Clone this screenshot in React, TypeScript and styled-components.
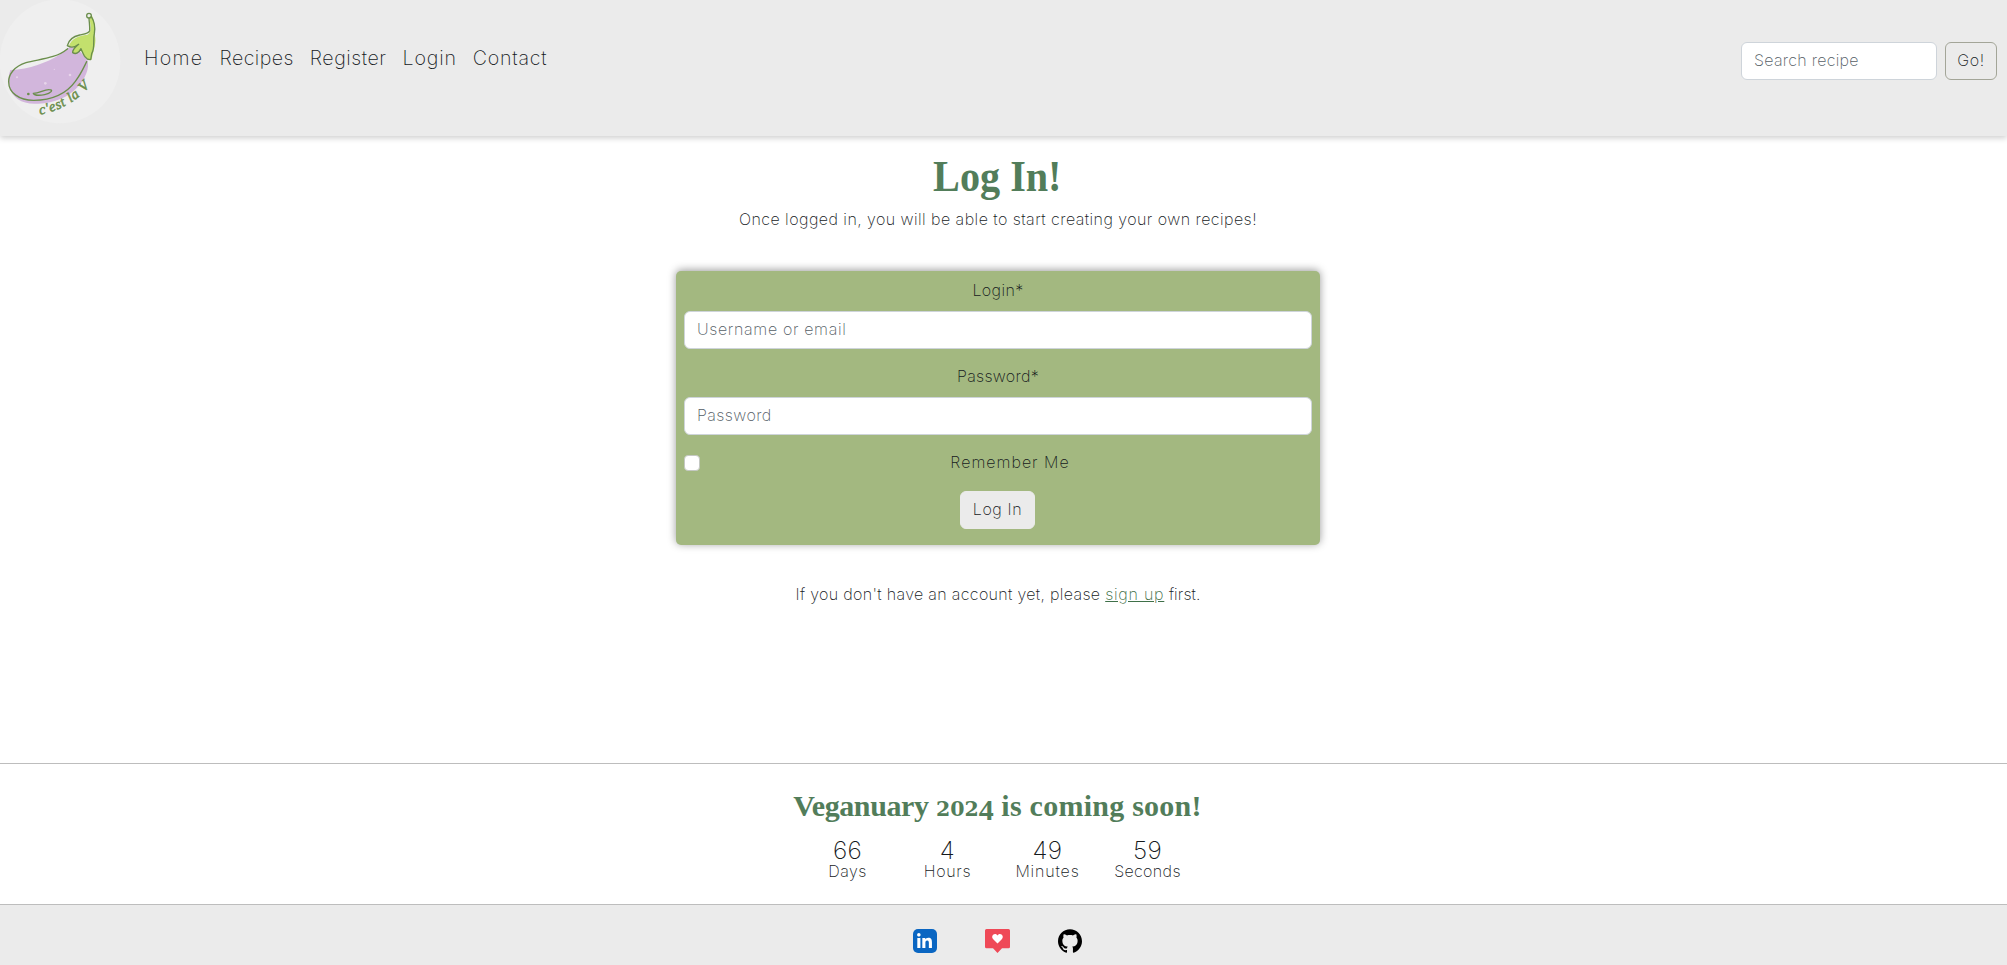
import React from 'react';
import styled, { createGlobalStyle } from 'styled-components';
import { FaLinkedinIn } from 'react-icons/fa';
import { SiGithub } from 'react-icons/si';

const Global = createGlobalStyle`
  *, *::before, *::after { box-sizing: border-box; }
  body {
    margin: 0;
    background: #fff;
    color: #15191c;
    font: 200 16px/24px Inter, sans-serif;
    overflow: hidden;
  }
`;

const Page = styled.div`
  height: 965px;
  display: flex;
  flex-direction: column;
`;

const Header = styled.header`
  height: 136px;
  flex: none;
  display: flex;
  align-items: flex-start;
  background: #ebebeb;
  box-shadow: 0 2px 6px rgba(0, 0, 0, 0.2);
  padding-right: 10px;
`;

const Logo = styled.svg`
  width: 130px;
  height: 124px;
  flex: none;
`;

const Nav = styled.nav`
  display: flex;
  gap: 16px;
  padding: 42px 0 0 14px;
  flex: 1;
`;

const Text = styled.span<{ $track?: number }>`
  letter-spacing: ${(p) => p.$track ?? 0}px;
`;

const NavLink = styled.a<{ $track: number }>`
  font-size: 19.6px;
  line-height: 32px;
  color: #15191c;
  letter-spacing: ${(p) => p.$track}px;
`;

const Search = styled.form`
  display: flex;
  gap: 8px;
  padding-top: 42px;
`;

const Input = styled.input<{ $track: number; $width?: string }>`
  display: block;
  width: ${(p) => p.$width ?? '100%'};
  height: 38px;
  padding: 0 12px 2px;
  border: 1px solid #ced4da;
  border-radius: 6px;
  background: #fff;
  font: inherit;
  letter-spacing: ${(p) => p.$track}px;
  &::placeholder { color: #545d65; opacity: 1; }
`;

const Button = styled.button<{ $outline?: boolean; $width: number }>`
  width: ${(p) => p.$width}px;
  height: 38px;
  padding: 0 0 2px;
  border: 1px solid ${(p) => (p.$outline ? '#a3a598' : '#ebebeb')};
  border-radius: 6px;
  background: #ebebeb;
  color: #15191c;
  font: inherit;
  letter-spacing: 0.6px;
`;

const Main = styled.main`
  height: 627px;
  flex: none;
  display: flex;
  flex-direction: column;
  align-items: center;
  padding: 17px 11px 0 0;
`;

const Title = styled.h1`
  margin: 0 1px 6px 0;
  font: 700 44px/48px "Liberation Serif", serif;
  color: #527d5a;
  transform: scaleX(0.913);
`;

const Line = styled.p<{ $track?: number }>`
  margin: 0;
  white-space: pre;
  letter-spacing: ${(p) => p.$track ?? 0}px;
`;

const Card = styled.form`
  width: 644px;
  height: 274px;
  margin: 40px 0 37px;
  padding: 7px 8px 0;
  display: flex;
  flex-direction: column;
  align-items: center;
  background: #a3b880;
  border-radius: 5px;
  box-shadow: 0 -1px 8px rgba(0, 0, 0, 0.4);
`;

const Field = styled.div`
  width: 100%;
  margin-bottom: 15px;
  text-align: center;
`;

const Label = styled.label<{ $track: number }>`
  display: block;
  margin-bottom: 9px;
  letter-spacing: ${(p) => p.$track}px;
`;

const CheckRow = styled.div`
  width: 100%;
  height: 24px;
  margin: 1px 0 16px;
  display: flex;
  align-items: center;
  gap: 8px;
`;

const Checkbox = styled.input`
  appearance: none;
  width: 16px;
  height: 16px;
  margin: 0;
  border: 1px solid #c4c8c2;
  border-radius: 4px;
  background: #fff;
`;

const CheckLabel = styled.label`
  flex: 1;
  padding-bottom: 2px;
  text-align: center;
  letter-spacing: 1px;
`;

const SubmitRow = styled.div`
  padding-right: 1px;
`;

const SignUp = styled.a`
  color: #3f7049;
  text-decoration: underline;
  letter-spacing: 0.75px;
`;

const Countdown = styled.section`
  height: 141px;
  flex: none;
  border-top: 1px solid #bdbdbd;
  padding: 25px 12px 0 0;
  display: flex;
  flex-direction: column;
  align-items: center;
`;

const Subtitle = styled.h2`
  display: flex;
  align-items: baseline;
  gap: 7.5px;
  margin: 0 0 12px;
  font: 700 30px/34px "Liberation Serif", serif;
  color: #527d5a;
`;

const Year = styled.span`
  display: flex;
  align-items: baseline;
`;

const LowDigits = styled.span`
  font: 700 20.5px/34px "DejaVu Serif", serif;
`;

const DeepDigit = styled.span`
  position: relative;
  top: 4px;
`;

const Units = styled.div`
  display: grid;
  grid-template-columns: repeat(4, 100px);
`;

const Unit = styled.div`
  text-align: center;
  display: flex;
  flex-direction: column;
`;

const Value = styled.span`
  font-size: 24.5px;
  line-height: 24px;
  letter-spacing: 0.3px;
`;

const UnitName = styled.span<{ $track: number }>`
  line-height: 18px;
  letter-spacing: ${(p) => p.$track}px;
`;

const Footer = styled.footer`
  flex: 1;
  display: flex;
  justify-content: center;
  gap: 48px;
  padding: 24px 13px 0 0;
  border-top: 1px solid #bdbdbd;
  background: #ebebeb;
`;

const LinkedIn = styled.a`
  width: 24px;
  height: 24px;
  display: grid;
  place-items: center;
  border-radius: 5px;
  background: #0a66c2;
  color: #fff;
`;

const units = [
  { value: 66, name: 'Days', track: 0.5 },
  { value: 4, name: 'Hours', track: 0.7 },
  { value: 49, name: 'Minutes', track: 0.85 },
  { value: 59, name: 'Seconds', track: 0.35 },
];

const EggplantLogo = () => (
  <Logo viewBox="0 0 390 372" fill="none" strokeLinecap="round" strokeLinejoin="round">
    <ellipse cx="180" cy="184" rx="181" ry="186" fill="#efefef" />
    <path d="M31 210C90 207 140 188 178 164C199 150 211 137 226 137L262 180C270 203 256 238 231 263C205 291 164 309 115 311C68 315 37 294 29 261C25 243 25 224 31 210Z" fill="#d2b6dc" />
    <path d="M207 137C214 119 232 106 263 104C278 94 271 69 267 51L276 48C286 66 285 91 284 105C291 126 280 150 275 179C260 181 250 164 242 148C234 162 224 159 218 158C217 150 220 145 224 143Z" fill="#c3e06d" />
    <g stroke="#6b8e4c" strokeWidth="4">
      <circle cx="267" cy="47" r="7" />
      <path d="M274 50C284 66 286 84 283 101C278 123 286 143 275 161C274 169 273 175 272 179C258 180 251 166 243 146C237 158 228 164 218 158C217 149 225 142 236 133C224 143 211 143 202 137C207 116 225 108 239 105C254 102 266 101 269 92C270 81 268 70 267 55" />
      <path d="M203 146C165 178 113 177 78 188C43 199 26 223 26 245C26 278 57 301 101 301C166 300 203 276 226 244C243 222 251 203 260 185" />
      <path d="M100 280C119 280 132 268 148 269C162 269 153 280 134 284C119 287 103 286 100 280Z" />
      <circle cx="85" cy="282" r="2" />
    </g>
    <g fill="#e7d4ea"><circle cx="136" cy="250" r="4" /><circle cx="210" cy="225" r="4" /><circle cx="51" cy="232" r="3" /><circle cx="163" cy="208" r="2" /></g>
    <path id="motto" d="M120 344C180 332 233 304 276 250" />
    <text fill="#6b8e4c" stroke="#6b8e4c" strokeWidth="1.5" fontFamily="Liberation Serif, serif" fontStyle="italic" fontSize="43">
      <textPath href="#motto" textLength="176">c'est la V</textPath>
    </text>
  </Logo>
);

const HeartBubble = () => (
  <svg width="25" height="24" viewBox="0 0 25 24">
    <path d="M1.5 0H23.5Q25 0 25 1.5V17.7Q25 19.2 23.5 19.2H17L12.5 24L8 19.2H1.5Q0 19.2 0 17.7V1.5Q0 0 1.5 0Z" fill="#ef4957" />
    <path d="M12.5 14.5L8 10C5.5 7.2 9.5 2.8 12.5 6.5C15.5 2.8 19.5 7.2 17 10Z" fill="#fff" />
  </svg>
);

export default function App() {
  return (
    <Page>
      <Global />
      <Header>
        <EggplantLogo />
        <Nav>
          <NavLink $track={1.3}>Home</NavLink>
          <NavLink $track={0.45}>Recipes</NavLink>
          <NavLink $track={0.55}>Register</NavLink>
          <NavLink $track={0.85}>Login</NavLink>
          <NavLink $track={0.75}>Contact</NavLink>
        </Nav>
        <Search>
          <Input $track={0.28} $width="196px" placeholder="Search recipe" />
          <Button type="button" $outline $width={52}>Go!</Button>
        </Search>
      </Header>
      <Main>
        <Title>Log In!</Title>
        <Line $track={0.45}>Once logged in, you will be able to start creating your own recipes!</Line>
        <Card>
          <Field>
            <Label $track={0.4}>Login*</Label>
            <Input $track={0.65} placeholder="Username or email" />
          </Field>
          <Field>
            <Label $track={0.3}>Password*</Label>
            <Input $track={0.42} placeholder="Password" />
          </Field>
          <CheckRow>
            <Checkbox type="checkbox" />
            <CheckLabel>Remember Me</CheckLabel>
          </CheckRow>
          <SubmitRow>
            <Button type="button" $width={75}>Log In</Button>
          </SubmitRow>
        </Card>
        <Line $track={0.33}>
          If you don't have an account yet, please <SignUp>sign up</SignUp>
          <Text $track={0.1}> first.</Text>
        </Line>
      </Main>
      <Countdown>
        <Subtitle>
          <Text $track={-0.4}>Veganuary</Text>
          <Year><LowDigits>202</LowDigits><DeepDigit>4</DeepDigit></Year>
          <Text $track={0.25}>is coming soon!</Text>
        </Subtitle>
        <Units>
          {units.map((u) => (
            <Unit key={u.name}>
              <Value>{u.value}</Value>
              <UnitName $track={u.track}>{u.name}</UnitName>
            </Unit>
          ))}
        </Units>
      </Countdown>
      <Footer>
        <LinkedIn><FaLinkedinIn size={17} /></LinkedIn>
        <HeartBubble />
        <SiGithub size={24} color="#000" />
      </Footer>
    </Page>
  );
}
